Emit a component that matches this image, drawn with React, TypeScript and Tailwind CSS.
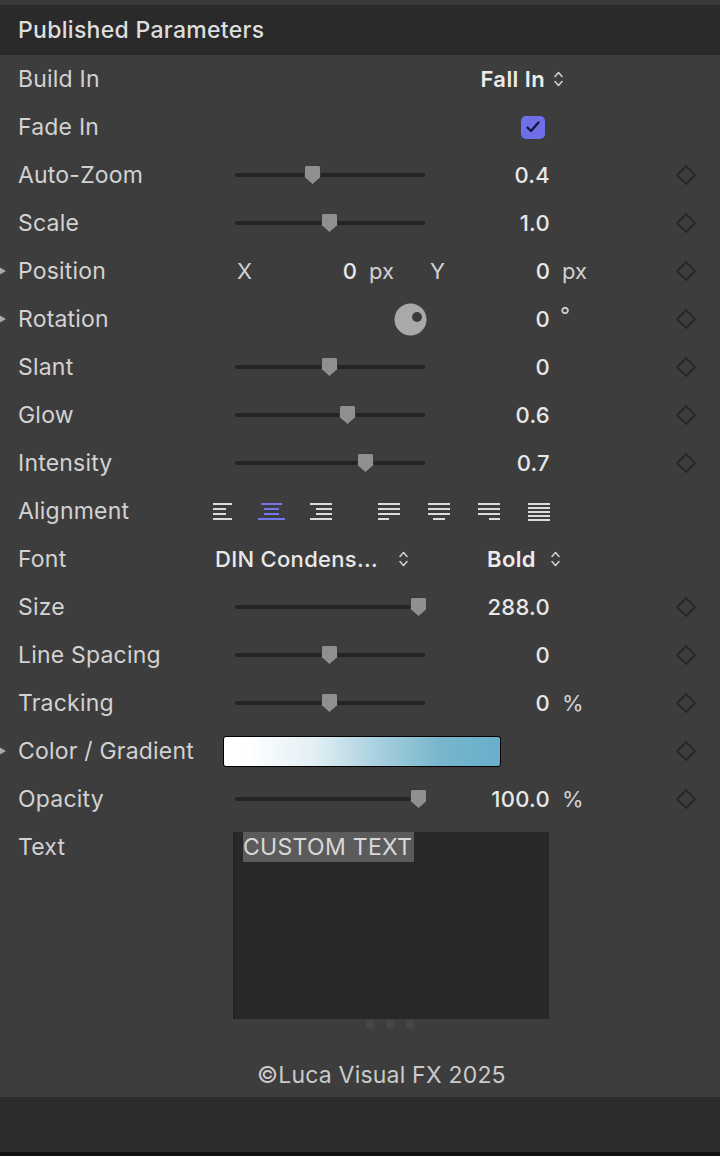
import type { ReactNode } from "react";

const FONT = { fontFamily: "Inter, 'Noto Sans', sans-serif" };

function Diamond() {
  return (
    <svg width="22" height="22" viewBox="0 0 22 22" className="ml-auto mr-[23px] shrink-0">
      <path d="M11 2 L20 11 L11 20 L2 11 Z" fill="none" stroke="#262626" strokeWidth="1.8" />
    </svg>
  );
}

function UpDown({ className = "" }: { className?: string }) {
  return (
    <svg width="11" height="20" viewBox="0 0 11 20" className={className} fill="none" stroke="#cfcfcf" strokeWidth="1.6" strokeLinecap="round" strokeLinejoin="round">
      <path d="M2 7.5 L5.5 3.5 L9 7.5" />
      <path d="M2 12.5 L5.5 16.5 L9 12.5" />
    </svg>
  );
}

function Disclosure() {
  return (
    <svg width="8" height="10" viewBox="0 0 8 10" className="absolute left-0 top-1/2 -translate-y-1/2">
      <path d="M-1 1 L6 5 L-1 9 Z" fill="#a8a8a8" />
    </svg>
  );
}

function Slider({ pos }: { pos: number }) {
  return (
    <div className="relative h-5 w-[190px] shrink-0">
      <div className="absolute left-0 right-0 top-1/2 h-[4px] -translate-y-1/2 rounded-full bg-[#232323]" />
      <svg width="17" height="20" viewBox="0 0 17 20" className="absolute top-0" style={{ left: pos - 8 }}>
        <path d="M2.5 0.5 H14.5 Q16.5 0.5 16.5 2.5 V12.5 L8.5 19.5 L0.5 12.5 V2.5 Q0.5 0.5 2.5 0.5 Z" fill="#8f8f8f" stroke="#2e2e2e" strokeWidth="0.8" />
      </svg>
    </div>
  );
}

function Row({ label, disclosure, labelW = "w-[235px]", children, diamond = true }: { label: string; disclosure?: boolean; labelW?: string; children?: ReactNode; diamond?: boolean }) {
  return (
    <div className="relative flex h-12 items-center">
      {disclosure && <Disclosure />}
      <div className={`${labelW} shrink-0 pl-[18px] text-[23px] tracking-[0.2px] text-[#d2d2d2]`}>{label}</div>
      {children}
      {diamond && <Diamond />}
    </div>
  );
}

function Value({ children }: { children: ReactNode }) {
  return <div className="w-[125px] shrink-0 text-right text-[22px] font-medium tracking-[0.3px] text-[#e8e8e8]">{children}</div>;
}

function Unit({ children }: { children?: ReactNode }) {
  return <div className="w-[80px] shrink-0 pl-[12px] text-[22px] text-[#d2d2d2]">{children}</div>;
}

function SliderRow({ label, pos, value, unit }: { label: string; pos: number; value: string; unit?: string }) {
  return (
    <Row label={label}>
      <Slider pos={pos} />
      <Value>{value}</Value>
      <Unit>{unit}</Unit>
    </Row>
  );
}

type Line = [number, number];
const ALIGN: { lines: Line[]; active?: boolean; ml: string; w: number }[] = [
  { lines: [[0, 19], [0, 13], [0, 13], [0, 19]], ml: "ml-0", w: 22 },
  { lines: [[3, 24], [6, 21], [6, 21], [0, 27]], active: true, ml: "ml-[23px]", w: 27 },
  { lines: [[0, 22], [6, 22], [6, 22], [0, 22]], ml: "ml-[25px]", w: 22 },
  { lines: [[0, 22], [0, 22], [0, 22], [0, 11]], ml: "ml-[46px]", w: 22 },
  { lines: [[0, 22], [0, 22], [0, 22], [5, 17]], ml: "ml-[28px]", w: 22 },
  { lines: [[0, 22], [0, 22], [0, 22], [11, 22]], ml: "ml-[28px]", w: 22 },
];

function AlignIcon({ lines, active, ml, w }: { lines: Line[]; active?: boolean; ml: string; w: number }) {
  const c = active ? "#7474ee" : "#dcdcdc";
  return (
    <svg width={w} height="20" viewBox={`0 0 ${w} 20`} className={`${ml} shrink-0`}>
      {lines.map(([a, b], i) => (
        <rect key={i} x={a} y={2 + i * 5} width={b - a} height="2" fill={c} />
      ))}
    </svg>
  );
}

export default function App() {
  return (
    <div className="flex h-[1156px] w-[720px] flex-col bg-[#3d3d3d]" style={FONT}>
      <div className="h-[5px] bg-[#3a3a3a]" />
      <div className="flex h-[50px] items-center bg-[#2a2a2a] pl-[18px] text-[23px] font-medium tracking-[0.3px] text-[#dedede]">
        Published Parameters
      </div>

      <Row label="Build In" diamond={false}>
        <div className="w-[190px] shrink-0" />
        <div className="w-[120px] shrink-0 text-right text-[22px] font-semibold tracking-[0.4px] text-[#ececec]">Fall In</div>
        <UpDown className="ml-[8px]" />
      </Row>

      <Row label="Fade In" diamond={false}>
        <div className="w-[286px] shrink-0" />
        <div className="flex h-[23px] w-[24px] items-center justify-center rounded-[5px] bg-[#6f6fea]">
          <svg width="16" height="14" viewBox="0 0 16 14" fill="none" stroke="#16163a" strokeWidth="2.4" strokeLinecap="round" strokeLinejoin="round">
            <path d="M2.5 7.5 L6 11 L13.5 2.5" />
          </svg>
        </div>
      </Row>

      <SliderRow label="Auto-Zoom" pos={77} value="0.4" />
      <SliderRow label="Scale" pos={94} value="1.0" />

      <Row label="Position" disclosure>
        <div className="flex w-[122px] shrink-0 items-center justify-between pl-[2px] text-[22px]">
          <span className="text-[#d2d2d2]">X</span>
          <span className="font-medium text-[#e8e8e8]">0</span>
        </div>
        <div className="w-[68px] shrink-0 pl-[12px] text-[22px] text-[#d2d2d2]">px</div>
        <div className="flex w-[125px] shrink-0 items-center justify-between pl-[5px] text-[22px]">
          <span className="text-[#d2d2d2]">Y</span>
          <span className="font-medium text-[#e8e8e8]">0</span>
        </div>
        <Unit>px</Unit>
      </Row>

      <Row label="Rotation" disclosure>
        <div className="flex w-[190px] shrink-0 justify-end">
          <svg width="33" height="33" viewBox="0 0 33 33" className="mr-[-2px]">
            <circle cx="16.5" cy="16.5" r="16" fill="#a9a9a9" />
            <circle cx="23" cy="14" r="5" fill="#3b3b3b" />
          </svg>
        </div>
        <Value>0</Value>
        <div className="w-[80px] shrink-0 -translate-y-[4px] pl-[10px] text-[22px] text-[#d2d2d2]">°</div>
      </Row>

      <SliderRow label="Slant" pos={94} value="0" />
      <SliderRow label="Glow" pos={112} value="0.6" />
      <SliderRow label="Intensity" pos={130} value="0.7" />

      <Row label="Alignment" labelW="w-[213px]" diamond={false}>
        {ALIGN.map((a, i) => (
          <AlignIcon key={i} {...a} />
        ))}
        <svg width="22" height="20" viewBox="0 0 22 20" className="ml-[28px] shrink-0">
          {[0, 1, 2, 3, 4].map((i) => (
            <rect key={i} x="0" y={2 + i * 4} width="22" height="2" fill="#dcdcdc" />
          ))}
        </svg>
      </Row>

      <Row label="Font" labelW="w-[215px]" diamond={false}>
        <div className="flex w-[194px] shrink-0 items-center justify-between text-[22px] font-medium tracking-[0.3px] text-[#e8e8e8]">
          <span>DIN Condens...</span>
          <UpDown />
        </div>
        <div className="ml-[78px] text-[22px] font-semibold tracking-[0.4px] text-[#ececec]">Bold</div>
        <UpDown className="ml-[14px]" />
      </Row>

      <SliderRow label="Size" pos={183} value="288.0" />
      <SliderRow label="Line Spacing" pos={94} value="0" />
      <SliderRow label="Tracking" pos={94} value="0" unit="%" />

      <Row label="Color / Gradient" labelW="w-[223px]" disclosure>
        <div className="h-[31px] w-[278px] shrink-0 rounded-[3px] border border-black bg-[linear-gradient(to_right,#ffffff_8%,#e4f0f5_32%,#a7d0df_56%,#78b6cd_78%,#68aecb_100%)]" />
      </Row>

      <SliderRow label="Opacity" pos={183} value="100.0" unit="%" />

      <div className="flex">
        <div className="flex h-12 w-[233px] shrink-0 items-center pl-[18px] text-[23px] tracking-[0.2px] text-[#d2d2d2]">Text</div>
        <div className="mt-[9px] h-[187px] w-[316px] border-l-2 border-[#222] bg-[#282828] pl-[8px]">
          <span className="inline-block bg-[#5b5b5b] pr-[2px] text-[23px] leading-[30px] tracking-[0.3px] text-[#d8d8d8]">CUSTOM TEXT</span>
        </div>
      </div>

      <div className="flex h-[10px] items-center gap-[11px] pl-[366px]">
        <div className="h-[9px] w-[9px] rounded-full bg-[#474747]" />
        <div className="h-[9px] w-[9px] rounded-full bg-[#474747]" />
        <div className="h-[9px] w-[9px] rounded-full bg-[#474747]" />
      </div>

      <div className="h-[68px] pl-[257px] pt-[32px] text-[23px] leading-[28px] tracking-[0.2px] text-[#cacaca]">©Luca Visual FX 2025</div>

      <div className="h-[55px] bg-[#2c2c2c]" />
      <div className="h-[4px] bg-[#111111]" />
    </div>
  );
}
